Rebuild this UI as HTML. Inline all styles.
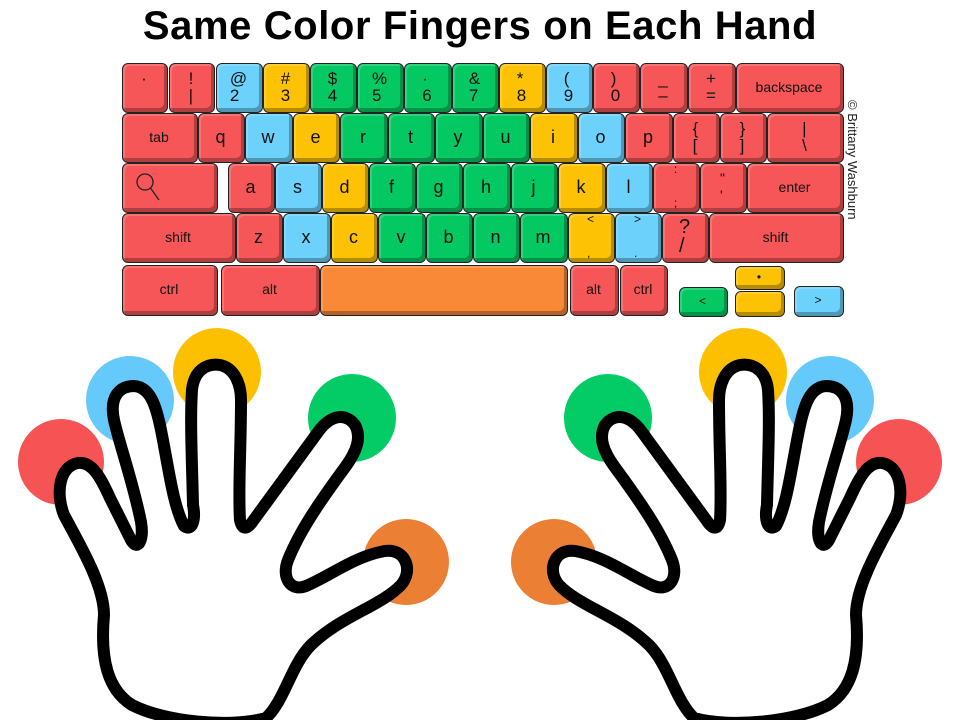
<!DOCTYPE html>
<html><head><meta charset="utf-8"><style>
body{margin:0;width:960px;height:720px;background:#fff;position:relative;overflow:hidden;font-family:"Liberation Sans",sans-serif}
h1{position:absolute;top:0;left:0;width:960px;margin:0;text-align:center;font:bold 40px/52px "Liberation Sans",sans-serif;color:#000;letter-spacing:0.6px}
.k{position:absolute;box-sizing:border-box;border:1.5px solid #222;border-radius:6px;box-shadow:inset -3px -4px 0 rgba(0,0,0,.28),inset 2px 2px 0 rgba(255,255,255,.18);display:flex;flex-direction:column;align-items:center;justify-content:center;color:#111;font-size:18px;line-height:16px;padding-bottom:3px;padding-right:2px}
.k.s{font-size:14px}
.k.d{font-size:17px;line-height:17px}
.r{background:#f65657}.b{background:#6cd1fb}.y{background:#fdc204}.g{background:#04c963}.o{background:#f98937}
.copy{position:absolute;left:846px;top:100px;transform-origin:0 0;transform:translate(14px,0) rotate(90deg);font-size:13px;white-space:nowrap;color:#222}
</style></head><body>
<h1>Same Color Fingers on Each Hand</h1>

<div class="k r d" style="left:122px;top:63px;width:46px;height:50px">·<br>&nbsp;</div>
<div class="k r d" style="left:169px;top:63px;width:46px;height:50px">!<br>|</div>
<div class="k b d" style="left:216px;top:63px;width:47px;height:50px">@<br>2</div>
<div class="k y d" style="left:263px;top:63px;width:47px;height:50px">#<br>3</div>
<div class="k g d" style="left:310px;top:63px;width:47px;height:50px">$<br>4</div>
<div class="k g d" style="left:357px;top:63px;width:47px;height:50px">%<br>5</div>
<div class="k g d" style="left:404px;top:63px;width:48px;height:50px">·<br>6</div>
<div class="k g d" style="left:452px;top:63px;width:47px;height:50px">&amp;<br>7</div>
<div class="k y d" style="left:499px;top:63px;width:47px;height:50px">*<br>8</div>
<div class="k b d" style="left:546px;top:63px;width:47px;height:50px">(<br>9</div>
<div class="k r d" style="left:593px;top:63px;width:47px;height:50px">)<br>0</div>
<div class="k r d" style="left:640px;top:63px;width:48px;height:50px">_<br>–</div>
<div class="k r d" style="left:688px;top:63px;width:48px;height:50px">+<br>=</div>
<div class="k r s" style="left:736px;top:63px;width:108px;height:50px">backspace</div>

<div class="k r s" style="left:122px;top:113px;width:76px;height:50px">tab</div>
<div class="k r" style="left:198px;top:113px;width:47px;height:50px">q</div>
<div class="k b" style="left:245px;top:113px;width:48px;height:50px">w</div>
<div class="k y" style="left:293px;top:113px;width:47px;height:50px">e</div>
<div class="k g" style="left:340px;top:113px;width:48px;height:50px">r</div>
<div class="k g" style="left:388px;top:113px;width:47px;height:50px">t</div>
<div class="k g" style="left:435px;top:113px;width:48px;height:50px">y</div>
<div class="k g" style="left:483px;top:113px;width:47px;height:50px">u</div>
<div class="k y" style="left:530px;top:113px;width:48px;height:50px">i</div>
<div class="k b" style="left:578px;top:113px;width:47px;height:50px">o</div>
<div class="k r" style="left:625px;top:113px;width:48px;height:50px">p</div>
<div class="k r d" style="left:673px;top:113px;width:47px;height:50px">{<br>[</div>
<div class="k r d" style="left:720px;top:113px;width:47px;height:50px">}<br>]</div>
<div class="k r d" style="left:767px;top:113px;width:77px;height:50px">|<br>\</div>

<div class="k r" style="left:122px;top:163px;width:96px;height:50px;align-items:flex-start;padding-left:12px">
<svg width="26" height="30" viewBox="0 0 26 30"><circle cx="10" cy="10" r="8" fill="none" stroke="#222" stroke-width="1.3"/><line x1="15.5" y1="16" x2="24" y2="28" stroke="#222" stroke-width="1.3"/></svg></div>
<div class="k r" style="left:228px;top:163px;width:47px;height:50px">a</div>
<div class="k b" style="left:275px;top:163px;width:47px;height:50px">s</div>
<div class="k y" style="left:322px;top:163px;width:47px;height:50px">d</div>
<div class="k g" style="left:369px;top:163px;width:47px;height:50px">f</div>
<div class="k g" style="left:416px;top:163px;width:47px;height:50px">g</div>
<div class="k g" style="left:463px;top:163px;width:48px;height:50px">h</div>
<div class="k g" style="left:511px;top:163px;width:47px;height:50px">j</div>
<div class="k y" style="left:558px;top:163px;width:48px;height:50px">k</div>
<div class="k b" style="left:606px;top:163px;width:47px;height:50px">l</div>
<div class="k r d" style="left:653px;top:163px;width:47px;height:50px;font-size:12px">:<br><br>;</div>
<div class="k r d" style="left:700px;top:163px;width:47px;height:50px;font-size:14px">"<br>'</div>
<div class="k r s" style="left:747px;top:163px;width:97px;height:50px">enter</div>

<div class="k r s" style="left:122px;top:213px;width:114px;height:50px">shift</div>
<div class="k r" style="left:236px;top:213px;width:47px;height:50px">z</div>
<div class="k b" style="left:283px;top:213px;width:48px;height:50px">x</div>
<div class="k y" style="left:331px;top:213px;width:47px;height:50px">c</div>
<div class="k g" style="left:378px;top:213px;width:48px;height:50px">v</div>
<div class="k g" style="left:426px;top:213px;width:47px;height:50px">b</div>
<div class="k g" style="left:473px;top:213px;width:47px;height:50px">n</div>
<div class="k g" style="left:520px;top:213px;width:48px;height:50px">m</div>
<div class="k y d" style="left:568px;top:213px;width:47px;height:50px;font-size:12px">&lt;<br><br>,</div>
<div class="k b d" style="left:615px;top:213px;width:47px;height:50px;font-size:12px">&gt;<br><br>.</div>
<div class="k r d" style="left:662px;top:213px;width:47px;height:50px;font-size:20px;line-height:19px">?<br>/</div>
<div class="k r s" style="left:709px;top:213px;width:135px;height:50px">shift</div>

<div class="k r s" style="left:122px;top:265px;width:96px;height:51px">ctrl</div>
<div class="k r s" style="left:221px;top:265px;width:99px;height:51px">alt</div>
<div class="k o" style="left:320px;top:265px;width:248px;height:51px"></div>
<div class="k r s" style="left:570px;top:265px;width:49px;height:51px">alt</div>
<div class="k r s" style="left:620px;top:265px;width:48px;height:51px">ctrl</div>
<div class="k g s" style="left:679px;top:287px;width:49px;height:30px;font-size:12px">&lt;</div>
<div class="k y s" style="left:735px;top:266px;width:50px;height:24px;font-size:12px">•</div>
<div class="k y" style="left:735px;top:291px;width:50px;height:26px"></div>
<div class="k b s" style="left:794px;top:286px;width:50px;height:31px;font-size:12px">&gt;</div>

<div class="copy">© Brittany Washburn</div>

<svg style="position:absolute;left:0;top:0" width="960" height="720" viewBox="0 0 960 720">
<defs>
<g id="hand">
<circle cx="61" cy="462" r="43" fill="#f65354"/>
<circle cx="130" cy="400" r="44" fill="#66c9fc"/>
<circle cx="217" cy="372" r="44" fill="#fdc000"/>
<circle cx="352" cy="418" r="44" fill="#03cb65"/>
<circle cx="406" cy="562" r="43" fill="#eb8034"/>
<path d="M 104 615 C 104 585 80 545 64 515 C 55 492 60 466 78 463 C 92 461 101 478 110 498 L 131 540 C 138 552 144 540 141 522 C 133 482 119 443 114 420 C 109 396 120 386 134 386 C 150 387 156 405 161 430 C 169 470 173 505 184 526 C 192 532 196 520 193 505 C 192 460 190 420 192 390 C 194 370 207 363 220 365 C 235 368 241 385 241 400 C 241 450 238 490 240 520 C 242 530 247 530 253 521 L 318 432 C 331 414 346 413 355 425 C 362 438 356 452 346 466 C 321 500 300 530 288 560 C 281 578 291 592 306 586 C 330 576 355 556 385 551 C 405 548 414 570 401 585 C 381 606 341 616 311 645 C 291 665 285 700 266 718 C 230 728 165 722 132 705 C 108 690 100 660 104 615 Z" fill="#fff" stroke="#000" stroke-width="12" stroke-linejoin="round"/>
</g>
</defs>
<use href="#hand"/>
<use href="#hand" transform="translate(960,0) scale(-1,1)"/>
</svg>
</body></html>
